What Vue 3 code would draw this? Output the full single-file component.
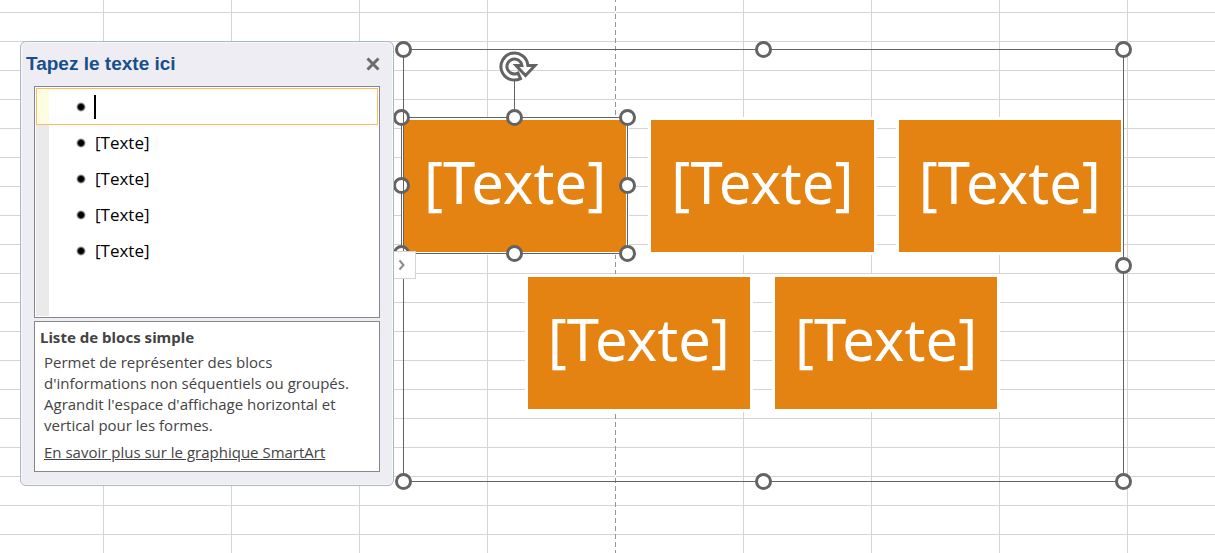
<script setup>
import { ref } from 'vue'

const items = ref(['', '[Texte]', '[Texte]', '[Texte]', '[Texte]'])
const active = ref(0)
const frameHandles = ['nw', 'n', 'ne', 'e', 'se', 's', 'sw']
const blockHandles = ['nw', 'n', 'ne', 'e', 'se', 's', 'sw', 'w']
</script>

<template>
  <main class="sheet">
    <aside class="pane">
      <header class="pane-head">
        <h1>Tapez le texte ici</h1>
        <button class="close" type="button" aria-label="Fermer">
          <svg viewBox="0 0 16 16" width="16" height="16"><path d="M2.500 2.500 13.500 13.500M13.500 2.500 2.500 13.500" /></svg>
        </button>
      </header>

      <ul class="entries">
        <li v-for="(item, i) in items" :key="i" :class="{ active: i === active }">
          <span class="bullet"></span>
          <span v-if="i === active" class="caret"></span>
          <input v-model="items[i]" type="text" :aria-label="'Texte ' + (i + 1)" />
        </li>
      </ul>

      <section class="about">
        <h2>Liste de blocs simple</h2>
        <p>Permet de représenter des blocs d'informations non séquentiels ou groupés. Agrandit l'espace d'affichage horizontal et vertical pour les formes.</p>
        <a href="#">En savoir plus sur le graphique SmartArt</a>
      </section>

      <button class="toggle" type="button" aria-label="Masquer le volet">
        <svg viewBox="0 0 8 12" width="8" height="12"><path d="M1.500 1.500 5.500 6 1.500 10.500" /></svg>
      </button>
    </aside>

    <section class="frame">
      <div v-for="(item, i) in items" :key="i" class="block">
        [Texte]
        <div v-if="i === active" class="selection">
          <span class="edge"></span>
          <span class="stem"></span>
          <svg class="rotate" viewBox="0 0 40 34" width="40" height="34">
            <path d="M22.500 28.600A13.500 13.500 0 1 1 29.900 15.500H37L27.500 25.500L18 15.500H23.900A7.500 7.500 0 1 0 20 23.100Z" />
          </svg>
          <span v-for="h in blockHandles" :key="h" class="handle" :class="h"></span>
        </div>
      </div>
      <span class="edge"></span>
      <span v-for="h in frameHandles" :key="h" class="handle" :class="h"></span>
    </section>
  </main>
</template>

<style>
body {
  margin: 0;
}
</style>

<style scoped>
* {
  box-sizing: border-box;
}

.sheet {
  position: relative;
  display: flex;
  align-items: flex-start;
  min-height: 100vh;
  padding: 41px 91px 67px 20px;
  font-family: "Noto Sans", "Open Sans", sans-serif;
  background:
    repeating-linear-gradient(to bottom, transparent 0 12px, #d4d4d4 12px 13px, transparent 13px 29px),
    repeating-linear-gradient(to right, transparent 0 103px, #d4d4d4 103px 104px, transparent 104px 128px),
    #fff;
}

/* page break line */
.sheet::before {
  content: "";
  position: absolute;
  top: 0;
  bottom: 0;
  left: 615px;
  width: 1px;
  background: repeating-linear-gradient(to bottom, #fff 0 3px, #969696 3px 8px);
  background-position: 0 3px;
}

.pane {
  position: relative;
  z-index: 3;
  flex: none;
  width: 374px;
  padding: 1px 13px 13px;
  border: 1px solid #a9b9bf;
  border-radius: 6px;
  background: #eeedf4;
  box-shadow: inset 0 0 0 1px #f8f8fb;
}

.pane-head {
  display: flex;
  align-items: center;
  justify-content: space-between;
  height: 43px;
  margin: 0 -1px 0 -8px;
  padding-bottom: 1px;
}

h1 {
  margin: 0;
  font: bold 19px/24px "Liberation Sans", Arial, sans-serif;
  color: #164f8c;
}

button {
  padding: 0;
  border: 0;
  background: none;
}

.close {
  width: 16px;
  height: 16px;
}

svg {
  display: block;
  fill: none;
}

.close svg {
  stroke: #6c6c6c;
  stroke-width: 3;
}

.entries {
  height: 232px;
  margin: 0;
  padding: 1px;
  list-style: none;
  border: 1px solid #85878a;
  background: linear-gradient(#eaeaea, #eaeaea) 1px 1px / 13px 228px no-repeat #fff;
}

.entries li {
  display: flex;
  align-items: center;
  height: 36px;
  padding-left: 40px;
}

.entries li.active {
  height: 37px;
  border: 1px solid #fbbb6a;
  padding-left: 39px;
  background: linear-gradient(to right, #fffde0 12px, #fff 12px);
  box-shadow: inset 0 0 0 1px #fffdf0;
}

.bullet {
  width: 10px;
  height: 10px;
  margin-right: 9px;
  border-radius: 50%;
  background: radial-gradient(circle closest-side, #000 50%, transparent 100%);
}

.caret {
  width: 2px;
  height: 24px;
  margin: 0 -1px 0 -1px;
  background: #000;
}

.entries input {
  flex: 1;
  min-width: 0;
  height: 24px;
  padding: 0;
  border: 0;
  outline: 0;
  background: none;
  font: 17px/24px "Open Sans", "Noto Sans", sans-serif;
  color: #000;
}

.about {
  height: 151px;
  margin-top: 3px;
  padding: 4px 9px 4px;
  border: 1px solid #85878a;
  background: #fff;
  font-family: "Open Sans", "Noto Sans", sans-serif;
  font-size: 15px;
  line-height: 21px;
  color: #444;
}

h2 {
  margin: 0 0 4px -4px;
  font-family: "Noto Sans", "Open Sans", sans-serif;
  font-size: 15px;
  line-height: 22px;
}

p {
  margin: 0 0 6px;
}

a {
  color: inherit;
}

.toggle {
  position: absolute;
  top: 209px;
  left: 373px;
  display: flex;
  align-items: center;
  width: 22px;
  height: 28px;
  padding-left: 4px;
  border: 1px solid #d4d4d4;
  border-left: 0;
  background: #fff;
}

.toggle svg {
  stroke: #8c8c8c;
  stroke-width: 2;
}

.frame {
  position: relative;
  display: flex;
  flex: 1;
  flex-wrap: wrap;
  justify-content: center;
  align-content: flex-start;
  gap: 25px;
  height: 433px;
  margin: 8px 0 0 9px;
  padding: 71px 3px 0 1px;
}

.edge {
  position: absolute;
  inset: 0;
  border: 1px solid #636363;
}

.block {
  position: relative;
  display: flex;
  align-items: center;
  justify-content: center;
  width: calc((100% - 50px) / 3);
  height: 132px;
  padding-bottom: 8px;
  background: #e58312;
  box-shadow: 0 0 0 3px #fff;
  font-size: 58px;
  line-height: 72px;
  color: #fff;
}

.selection {
  position: absolute;
  inset: -3px -2px -2px -3px;
}

.handle {
  position: absolute;
  width: 17px;
  height: 17px;
  border: 3px solid #636363;
  border-radius: 50%;
  background: #fff;
}

.nw,
.w,
.sw {
  left: -8px;
}

.n,
.s {
  left: calc(50% - 9px);
}

.ne,
.e,
.se {
  right: -8px;
}

.nw,
.n,
.ne {
  top: -8px;
}

.e,
.w {
  top: calc(50% - 9px);
}

.sw,
.s,
.se {
  bottom: -8px;
}

.stem {
  position: absolute;
  left: calc(50% - 1px);
  top: -37px;
  width: 1px;
  height: 32px;
  background: #636363;
}

.rotate {
  position: absolute;
  left: calc(50% - 17px);
  top: -67px;
  fill: #fff;
  stroke: #636363;
  stroke-width: 3;
}
</style>
